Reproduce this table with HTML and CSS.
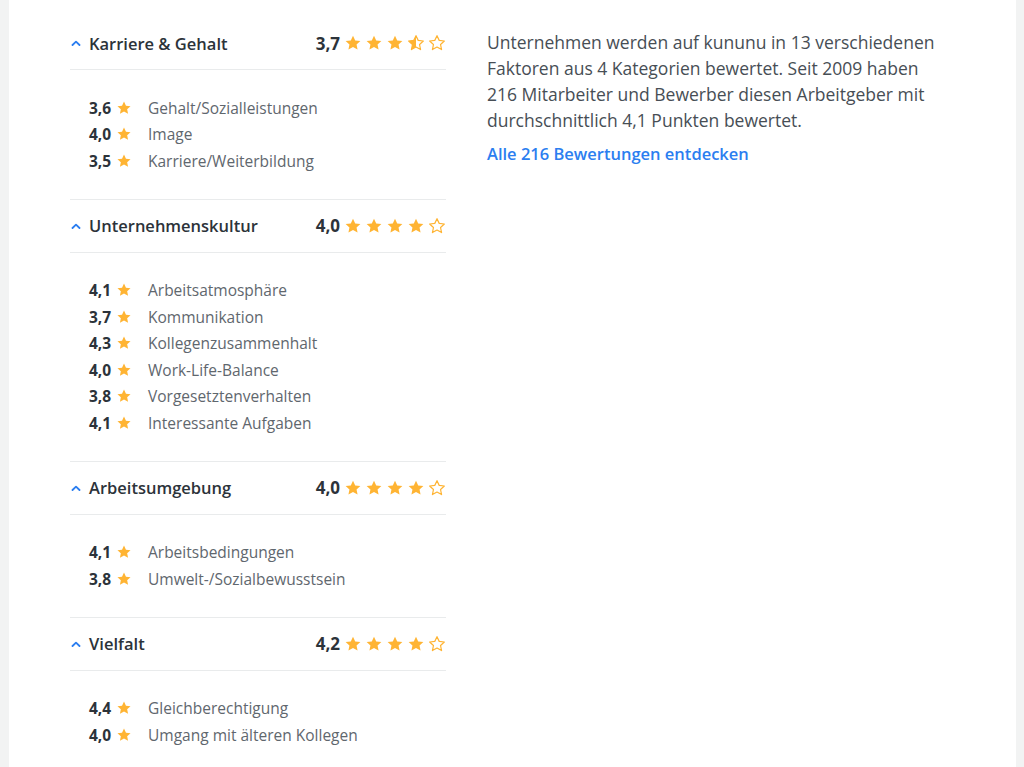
FILE: index.html
```html
<!DOCTYPE html>
<html lang="de">

<head>
    <meta charset="utf-8">
    <meta name="viewport" content="width=device-width, initial-scale=1.0">
    <title>Bewertungen</title>
    <link rel="stylesheet" href="styles.css">
</head>

<body>

    <svg class="defs" width="0" height="0">
        <defs>
            <path id="star" d="M12 2.2l2.95 6.3 6.85.8-5.08 4.7 1.36 6.8L12 17.4l-6.08 3.4 1.36-6.8L2.2 9.3l6.85-.8z" />
            <clipPath id="halb">
                <rect x="0" y="0" width="12" height="24" />
            </clipPath>
        </defs>
    </svg>

    <div class="seite">
        <div class="inhalt">

            <div class="kategorien">

                <section class="kategorie">
                    <div class="kopf">
                        <span class="pfeil"><svg viewBox="0 0 10 6"><path d="M1.5 5 5 1.6 8.5 5" /></svg></span>
                        <h3>Karriere &amp; Gehalt</h3>
                        <span class="wert">3,7</span>
                        <span class="sterne">
                            <svg viewBox="0 0 24 24"><use href="#star" class="voll" /></svg>
                            <svg viewBox="0 0 24 24"><use href="#star" class="voll" /></svg>
                            <svg viewBox="0 0 24 24"><use href="#star" class="voll" /></svg>
                            <svg viewBox="0 0 24 24"><use href="#star" class="leer" /><use href="#star" class="voll" clip-path="url(#halb)" /></svg>
                            <svg viewBox="0 0 24 24"><use href="#star" class="leer" /></svg>
                        </span>
                    </div>
                    <ul class="faktoren">
                        <li><b>3,6</b><svg viewBox="0 0 24 24"><use href="#star" class="voll" /></svg><span>Gehalt/Sozialleistungen</span></li>
                        <li><b>4,0</b><svg viewBox="0 0 24 24"><use href="#star" class="voll" /></svg><span>Image</span></li>
                        <li><b>3,5</b><svg viewBox="0 0 24 24"><use href="#star" class="voll" /></svg><span>Karriere/Weiterbildung</span></li>
                    </ul>
                </section>

                <section class="kategorie">
                    <div class="kopf">
                        <span class="pfeil"><svg viewBox="0 0 10 6"><path d="M1.5 5 5 1.6 8.5 5" /></svg></span>
                        <h3>Unternehmenskultur</h3>
                        <span class="wert">4,0</span>
                        <span class="sterne">
                            <svg viewBox="0 0 24 24"><use href="#star" class="voll" /></svg>
                            <svg viewBox="0 0 24 24"><use href="#star" class="voll" /></svg>
                            <svg viewBox="0 0 24 24"><use href="#star" class="voll" /></svg>
                            <svg viewBox="0 0 24 24"><use href="#star" class="voll" /></svg>
                            <svg viewBox="0 0 24 24"><use href="#star" class="leer" /></svg>
                        </span>
                    </div>
                    <ul class="faktoren">
                        <li><b>4,1</b><svg viewBox="0 0 24 24"><use href="#star" class="voll" /></svg><span>Arbeitsatmosphäre</span></li>
                        <li><b>3,7</b><svg viewBox="0 0 24 24"><use href="#star" class="voll" /></svg><span>Kommunikation</span></li>
                        <li><b>4,3</b><svg viewBox="0 0 24 24"><use href="#star" class="voll" /></svg><span>Kollegenzusammenhalt</span></li>
                        <li><b>4,0</b><svg viewBox="0 0 24 24"><use href="#star" class="voll" /></svg><span>Work-Life-Balance</span></li>
                        <li><b>3,8</b><svg viewBox="0 0 24 24"><use href="#star" class="voll" /></svg><span>Vorgesetztenverhalten</span></li>
                        <li><b>4,1</b><svg viewBox="0 0 24 24"><use href="#star" class="voll" /></svg><span>Interessante Aufgaben</span></li>
                    </ul>
                </section>

                <section class="kategorie">
                    <div class="kopf">
                        <span class="pfeil"><svg viewBox="0 0 10 6"><path d="M1.5 5 5 1.6 8.5 5" /></svg></span>
                        <h3>Arbeitsumgebung</h3>
                        <span class="wert">4,0</span>
                        <span class="sterne">
                            <svg viewBox="0 0 24 24"><use href="#star" class="voll" /></svg>
                            <svg viewBox="0 0 24 24"><use href="#star" class="voll" /></svg>
                            <svg viewBox="0 0 24 24"><use href="#star" class="voll" /></svg>
                            <svg viewBox="0 0 24 24"><use href="#star" class="voll" /></svg>
                            <svg viewBox="0 0 24 24"><use href="#star" class="leer" /></svg>
                        </span>
                    </div>
                    <ul class="faktoren">
                        <li><b>4,1</b><svg viewBox="0 0 24 24"><use href="#star" class="voll" /></svg><span>Arbeitsbedingungen</span></li>
                        <li><b>3,8</b><svg viewBox="0 0 24 24"><use href="#star" class="voll" /></svg><span>Umwelt-/Sozialbewusstsein</span></li>
                    </ul>
                </section>

                <section class="kategorie">
                    <div class="kopf">
                        <span class="pfeil"><svg viewBox="0 0 10 6"><path d="M1.5 5 5 1.6 8.5 5" /></svg></span>
                        <h3>Vielfalt</h3>
                        <span class="wert">4,2</span>
                        <span class="sterne">
                            <svg viewBox="0 0 24 24"><use href="#star" class="voll" /></svg>
                            <svg viewBox="0 0 24 24"><use href="#star" class="voll" /></svg>
                            <svg viewBox="0 0 24 24"><use href="#star" class="voll" /></svg>
                            <svg viewBox="0 0 24 24"><use href="#star" class="voll" /></svg>
                            <svg viewBox="0 0 24 24"><use href="#star" class="leer" /></svg>
                        </span>
                    </div>
                    <ul class="faktoren">
                        <li><b>4,4</b><svg viewBox="0 0 24 24"><use href="#star" class="voll" /></svg><span>Gleichberechtigung</span></li>
                        <li><b>4,0</b><svg viewBox="0 0 24 24"><use href="#star" class="voll" /></svg><span>Umgang mit älteren Kollegen</span></li>
                    </ul>
                </section>

            </div>

            <aside class="info">
                <p>Unternehmen werden auf kununu in 13 verschiedenen Faktoren aus 4 Kategorien bewertet. Seit 2009 haben 216 Mitarbeiter und Bewerber diesen Arbeitgeber mit durchschnittlich 4,1 Punkten bewertet.</p>
                <a href="#">Alle 216 Bewertungen entdecken</a>
            </aside>

        </div>
    </div>

</body>

</html>
```

FILE: styles.css
```css
* {
    box-sizing: border-box;
}

body {
    margin: 0;
    background-color: #f2f3f3;
    font-family: 'Open Sans', 'Noto Sans', sans-serif;
    color: #333a40;
}

.defs {
    position: absolute;
}

.seite {
    margin: 0 8px 0 9px;
    min-height: 767px;
    background-color: white;
}

.inhalt {
    display: grid;
    grid-template-columns: 376px 1fr;
    gap: 41px;
    padding: 17px 70px 0 61px;
}

/* kategorien links */

.kategorie {
    border-bottom: 1px solid #e9ebec;
}

.kopf {
    display: flex;
    align-items: center;
    height: 53px;
    border-bottom: 1px solid #e9ebec;
}

.pfeil {
    width: 19px;
    display: flex;
    align-items: center;
}

.pfeil svg {
    width: 10px;
    height: 6px;
    margin-left: 1px;
    fill: none;
    stroke: #2b7ef0;
    stroke-width: 1.8;
    stroke-linecap: round;
    stroke-linejoin: round;
}

.kopf h3 {
    flex: 1;
    margin: 0;
    font-size: 16.5px;
    font-weight: 600;
    color: #2c333a;
}

.wert {
    font-size: 17px;
    font-weight: 700;
    color: #2c333a;
    margin-right: 4px;
}

.sterne {
    display: flex;
    gap: 3px;
}

.sterne svg {
    width: 18px;
    height: 18px;
    display: block;
}

.voll {
    fill: #ffb433;
}

.leer {
    fill: none;
    stroke: #ffb433;
    stroke-width: 1.6;
    stroke-linejoin: round;
}

.faktoren {
    list-style: none;
    margin: 0;
    padding: 24.5px 0 24.5px 19px;
}

.faktoren li {
    display: flex;
    align-items: center;
    height: 26.5px;
    font-size: 15.5px;
}

.faktoren b {
    width: 23px;
    font-weight: 700;
    color: #2c333a;
}

.faktoren li svg {
    width: 16px;
    height: 16px;
    margin: 0 16px 0 4px;
}

.faktoren span {
    color: #5f676e;
}

/* info rechts */

.info p {
    margin: 12px 0 9px;
    font-size: 17.5px;
    line-height: 26px;
    color: #474e55;
}

.info a {
    font-size: 16.5px;
    font-weight: 600;
    color: #2b7ef0;
    text-decoration: none;
}
```
